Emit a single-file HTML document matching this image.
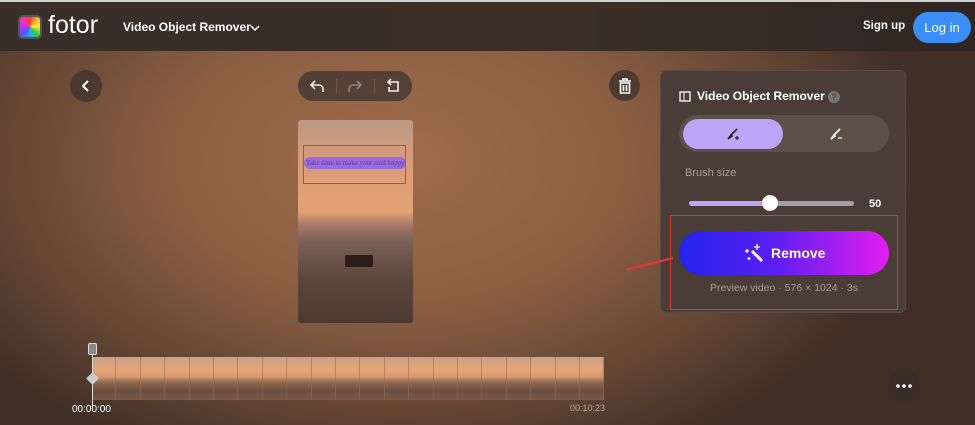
<!DOCTYPE html><html><head><style>
*{margin:0;padding:0;box-sizing:border-box}
body{width:975px;height:425px;overflow:hidden;font-family:"Liberation Sans",sans-serif;position:relative;
background:radial-gradient(ellipse 520px 330px at 400px 160px,#a06c4b 0%,#8a5e42 45%,#5e4231 80%,#3f2f26 100%);}
.hdr{position:absolute;left:0;top:0;width:975px;height:51px;background:linear-gradient(90deg,#3a2e28,#3b2f28 60%,#2f2621);border-top:2px solid #cfcfcf}
.abs{position:absolute}
.circ{position:absolute;border-radius:50%;background:rgba(70,55,47,.9);display:flex;align-items:center;justify-content:center}
.panel{position:absolute;left:660px;top:70px;width:246px;height:243px;background:#4a3c36;border-radius:6px;border:1px solid #5a4b44}
.frame{position:absolute;top:357px;width:24.4px;height:43px;background:linear-gradient(#c9a088 0%,#e6a477 30%,#d89a70 45%,#8a6550 60%,#6a4d3e 80%,#7a5a48 100%);border-right:1px solid rgba(150,110,85,.6)}
</style></head><body>
<div class="hdr">
 <div class="abs" style="left:18px;top:13px;width:24px;height:24px;border-radius:5px;background:conic-gradient(#f33,#fb3,#ee3,#3c4,#2af,#55f,#b3f,#f3a,#f33);border:2px solid #555"></div>
 <div class="abs" style="left:48px;top:9px;color:#fff;font-size:25px">fotor</div>
 <div class="abs" style="left:123px;top:18px;color:#fff;font-size:12px;font-weight:bold">Video Object Remover</div>
 <svg class="abs" style="left:250px;top:22px" width="10" height="8"><path d="M1 2l4 4 4-4" stroke="#fff" stroke-width="1.5" fill="none"/></svg>
 <div class="abs" style="left:863px;top:18px;color:#fff;font-size:11.5px;font-weight:bold">Sign up</div>
 <div class="abs" style="left:913px;top:10px;width:58px;height:31px;border-radius:16px;background:#3a8ef5;color:#fff;font-size:13px;text-align:center;line-height:31px">Log in</div>
</div>
<div class="circ" style="left:70px;top:70px;width:32px;height:32px"><svg width="12" height="12"><path d="M8 1L3 6l5 5" stroke="#fff" stroke-width="2" fill="none"/></svg></div>
<div class="abs" style="left:298px;top:71px;width:114px;height:30px;border-radius:15px;background:rgba(75,60,52,.9)">
 <svg class="abs" style="left:12px;top:8px" width="14" height="14"><path d="M5 2L1 6l4 4M1 6h8a4 4 0 0 1 4 4v3" stroke="#eee" stroke-width="1.6" fill="none"/></svg>
 <div class="abs" style="left:38px;top:8px;width:1px;height:14px;background:#6a5a52"></div>
 <svg class="abs" style="left:50px;top:8px" width="14" height="14"><path d="M9 2l4 4-4 4M13 6H5a4 4 0 0 0-4 4v3" stroke="#888" stroke-width="1.6" fill="none"/></svg>
 <div class="abs" style="left:76px;top:8px;width:1px;height:14px;background:#6a5a52"></div>
 <svg class="abs" style="left:88px;top:7px" width="14" height="15"><path d="M5 1L2 4l3 3M2 4h10v9H3V9" stroke="#eee" stroke-width="1.6" fill="none"/></svg>
</div>
<div class="circ" style="left:609px;top:70px;width:31px;height:31px"><svg width="14" height="16"><path d="M1 3h12M5 3V1h4v2M2.5 5h9v10h-9zM5.5 7v6M8.5 7v6" stroke="#fff" stroke-width="1.6" fill="none"/></svg></div>
<div class="abs" style="left:298px;top:120px;width:115px;height:203px;border-radius:3px;background:linear-gradient(#b99882 0%,#d99d7b 20%,#e5a271 45%,#a4786a 52%,#7a6058 60%,#5d463c 78%,#4c3a32 100%)"></div>
<div class="abs" style="left:304px;top:157px;width:102px;height:12px;border-radius:6px;background:#9a6ae0;color:#5a3a8a;font-family:'Liberation Serif',serif;font-size:7px;line-height:12px;padding-left:2px;white-space:nowrap;overflow:hidden">Take time to make your soul happy.</div>
<div class="abs" style="left:303px;top:145px;width:103px;height:39px;border:1px solid #e33"></div>
<div class="abs" style="left:345px;top:255px;width:28px;height:12px;background:#2a1e1a;border-radius:2px"></div>
<div class="panel">
 <svg class="abs" style="left:18px;top:20px" width="12" height="11"><rect x="1" y="1" width="10" height="9" stroke="#fff" fill="none" stroke-width="1.3"/><path d="M5 1v9" stroke="#fff"/></svg>
 <div class="abs" style="left:36px;top:18px;color:#fff;font-size:12px;font-weight:bold">Video Object Remover <span style="display:inline-block;width:12px;height:12px;border-radius:50%;background:#777;color:#444;font-size:9px;text-align:center;line-height:12px">?</span></div>
 <div class="abs" style="left:18px;top:44px;width:210px;height:37px;border-radius:18px;background:#5d4f49"></div>
 <div class="abs" style="left:22px;top:48px;width:100px;height:30px;border-radius:15px;background:#bda4f7"></div>
 <svg class="abs" style="left:65px;top:56px" width="14" height="14"><path d="M11 2L5 8M2 12l3-4 1 1z" stroke="#222" stroke-width="1.6" fill="#222"/><path d="M9 11h4M11 9v4" stroke="#222" stroke-width="1.2"/></svg>
 <svg class="abs" style="left:168px;top:56px" width="14" height="14"><path d="M11 2L5 8M2 12l3-4 1 1z" stroke="#fff" stroke-width="1.6" fill="#fff"/><path d="M9 11h4" stroke="#fff" stroke-width="1.2"/></svg>
 <div class="abs" style="left:24px;top:96px;color:#a9a09b;font-size:11px">Brush size</div>
 <div class="abs" style="left:28px;top:130px;width:165px;height:5px;border-radius:3px;background:#9ea0a6"></div>
 <div class="abs" style="left:28px;top:130px;width:82px;height:5px;border-radius:3px;background:#bda4f7"></div>
 <div class="abs" style="left:101px;top:124px;width:16px;height:16px;border-radius:50%;background:#fff"></div>
 <div class="abs" style="left:208px;top:127px;color:#fff;font-size:11px;font-weight:bold">50</div>
 <div class="abs" style="left:18px;top:160px;width:210px;height:44px;border-radius:22px;background:linear-gradient(90deg,#2323ee,#5a1ff0 45%,#e41ef0)"></div>
 <svg class="abs" style="left:83px;top:172px" width="20" height="20"><path d="M8 8l10 10" stroke="#fff" stroke-width="3"/><path d="M13 1v6M10 4h6M3 6v4M1 8h4M5 14v3M3.5 15.5h3" stroke="#fff" stroke-width="1.3"/></svg>
 <div class="abs" style="left:110px;top:174px;color:#fff;font-size:14px;font-weight:bold">Remove</div>
 <div class="abs" style="left:0;top:211px;width:246px;text-align:center;color:#a9a09b;font-size:10.5px">Preview video · 576 × 1024 · 3s</div>
</div>
<div class="abs" style="left:670px;top:215px;width:228px;height:95px;border:1px solid #e33"></div>
<div class="abs" style="left:625px;top:257px;width:48px;height:2px;background:#e33;transform:rotate(-14deg);transform-origin:right"></div>
<div id="tl"></div>
<script>
let s='';for(let i=0;i<21;i++){s+=`<div class="frame" style="left:${92+i*24.4}px"></div>`}document.getElementById('tl').innerHTML=s;
</script>
<div class="abs" style="left:92px;top:344px;width:1px;height:62px;background:#ddd"></div>
<div class="abs" style="left:88px;top:343px;width:9px;height:12px;background:#888;border:1px solid #ddd;border-radius:2px"></div>
<div class="abs" style="left:88px;top:374px;width:9px;height:9px;background:#ccc;transform:rotate(45deg)"></div>
<div class="abs" style="left:72px;top:404px;color:#fff;font-size:10px">00:00:00</div>
<div class="abs" style="left:570px;top:403px;color:#b8a89c;font-size:9px">00:10:23</div>
<div class="circ" style="left:888px;top:370px;width:32px;height:32px;background:#3a2e2a">
 <svg width="16" height="4"><circle cx="2" cy="2" r="1.8" fill="#fff"/><circle cx="8" cy="2" r="1.8" fill="#fff"/><circle cx="14" cy="2" r="1.8" fill="#fff"/></svg></div>
</body></html>
